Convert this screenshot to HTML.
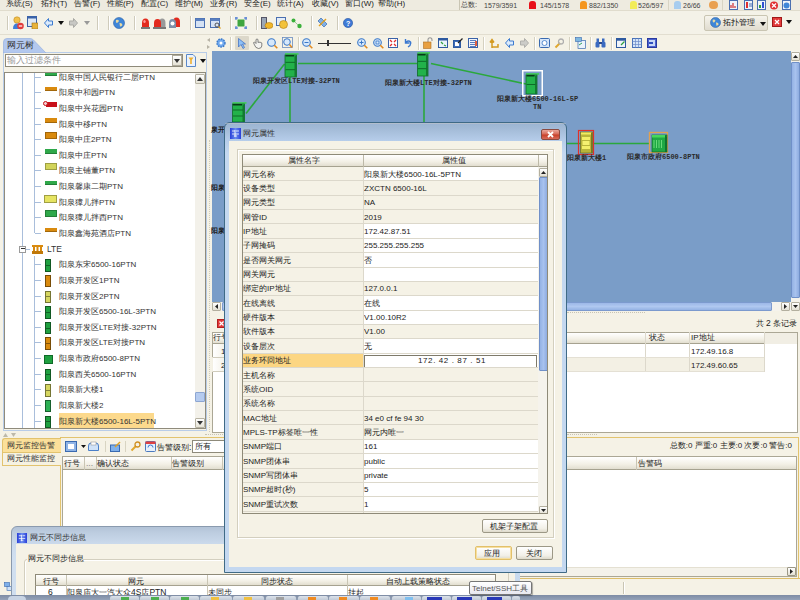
<!DOCTYPE html>
<html><head><meta charset="utf-8">
<style>
*{margin:0;padding:0;box-sizing:border-box}
html,body{width:800px;height:600px;overflow:hidden;background:#F5F2E6;font-family:"Liberation Sans",sans-serif;font-size:9px;color:#222;position:relative}
.a{position:absolute}
.t{position:absolute;white-space:nowrap;line-height:1}
.k{font-size:1.25em;line-height:0;-webkit-text-stroke:.2px;letter-spacing:-.5px}
</style></head><body>

<div class="a" style="left:0;top:0;width:800px;height:11px;background:#EEEBE0;border-bottom:1px solid #E0DCCD"></div>
<div class="t" style="left:6px;top:0px;font-size:8px;color:#222"><span class="k">系统</span>(S)</div>
<div class="t" style="left:41px;top:0px;font-size:8px;color:#222"><span class="k">拓扑</span>(T)</div>
<div class="t" style="left:74px;top:0px;font-size:8px;color:#222"><span class="k">告警</span>(F)</div>
<div class="t" style="left:107px;top:0px;font-size:8px;color:#222"><span class="k">性能</span>(P)</div>
<div class="t" style="left:141px;top:0px;font-size:8px;color:#222"><span class="k">配置</span>(C)</div>
<div class="t" style="left:175px;top:0px;font-size:8px;color:#222"><span class="k">维护</span>(M)</div>
<div class="t" style="left:210px;top:0px;font-size:8px;color:#222"><span class="k">业务</span>(R)</div>
<div class="t" style="left:244px;top:0px;font-size:8px;color:#222"><span class="k">安全</span>(E)</div>
<div class="t" style="left:277px;top:0px;font-size:8px;color:#222"><span class="k">统计</span>(A)</div>
<div class="t" style="left:312px;top:0px;font-size:8px;color:#222"><span class="k">收藏</span>(V)</div>
<div class="t" style="left:345px;top:0px;font-size:8px;color:#222"><span class="k">窗口</span>(W)</div>
<div class="t" style="left:378px;top:0px;font-size:8px;color:#222"><span class="k">帮助</span>(H)</div>
<div class="a" style="left:459px;top:0;width:1px;height:10px;background:#C9C5B4"></div>
<div class="t" style="left:461px;top:1px;font-size:7.5px;color:#444"><span class="k">总数</span>:</div><div class="t" style="left:484px;top:1.5px;font-size:7px;color:#444">1579/3591</div>
<div class="a" style="left:529px;top:1px;width:7px;height:8px;background:#E8101A;border-radius:3px 3px 0 0"></div>
<div class="t" style="left:540px;top:1.5px;font-size:7px;color:#444">145/1578</div>
<div class="a" style="left:580px;top:1px;width:7px;height:8px;background:#F5961E;border-radius:3px 3px 0 0"></div>
<div class="t" style="left:589px;top:1.5px;font-size:7px;color:#444">882/1350</div>
<div class="a" style="left:630px;top:1px;width:7px;height:8px;background:#F2EC58;border-radius:3px 3px 0 0"></div>
<div class="t" style="left:638px;top:1.5px;font-size:7px;color:#444">526/597</div>
<div class="a" style="left:674px;top:1px;width:7px;height:8px;background:#A8CDEF;border-radius:3px 3px 0 0"></div>
<div class="t" style="left:683px;top:1.5px;font-size:7px;color:#444">26/66</div>
<div class="a" style="left:668px;top:0;width:1px;height:10px;background:#D8D4C4"></div>
<div class="a" style="left:722px;top:0;width:1px;height:10px;background:#D8D4C4"></div>
<div class="a" style="left:709px;top:1px;width:9px;height:8px;background:#E9A050;border-radius:4px"></div>
<svg class="a" style="left:729px;top:0px" width="9" height="10" viewBox="0 0 9 10"><rect x=".5" y=".5" width="8" height="9" fill="#EEF3FA" stroke="#4A6FB0"/><path d="M2 8V5M4 8V3M6 8V6" stroke="#D03030" stroke-width="1.2"/></svg>
<svg class="a" style="left:744px;top:0px" width="9" height="10" viewBox="0 0 9 10"><rect x=".5" y=".5" width="8" height="9" fill="#EEF3FA" stroke="#4A6FB0"/><rect x="2" y="2" width="2" height="6" fill="#E03030"/><path d="M5 4H8M5 6H8" stroke="#4A6FB0"/></svg>
<svg class="a" style="left:757px;top:0px" width="9" height="10" viewBox="0 0 9 10"><rect x=".5" y=".5" width="8" height="9" fill="#EEF3FA" stroke="#4A6FB0"/><rect x="2" y="5" width="2" height="3" fill="#30A040"/><rect x="5" y="2" width="2" height="6" fill="#3050D0"/></svg>
<svg class="a" style="left:769px;top:1px" width="10" height="9" viewBox="0 0 10 9"><circle cx="5" cy="4.5" r="4" fill="#E03030"/><path d="M3 2.5L7 6.5M7 2.5L3 6.5" stroke="#fff" stroke-width="1.3"/></svg>
<svg class="a" style="left:782px;top:0px" width="9" height="10" viewBox="0 0 9 10"><rect x=".5" y=".5" width="8" height="9" fill="#EEF3FA" stroke="#4A6FB0"/><circle cx="4.5" cy="5.5" r="3" fill="#3F86D8"/></svg>


<div class="a" style="left:0;top:11px;width:800px;height:23px;background:#F4F2E8"></div>

<div class="a" style="left:7px;top:16px;width:1px;height:14px;background:#CFCBBB;box-shadow:1px 0 0 #fff"></div>
<div class="a" style="left:97px;top:16px;width:1px;height:14px;background:#CFCBBB;box-shadow:1px 0 0 #fff"></div>
<div class="a" style="left:108px;top:16px;width:1px;height:14px;background:#CFCBBB;box-shadow:1px 0 0 #fff"></div>
<div class="a" style="left:134px;top:16px;width:1px;height:14px;background:#CFCBBB;box-shadow:1px 0 0 #fff"></div>
<div class="a" style="left:190px;top:16px;width:1px;height:14px;background:#CFCBBB;box-shadow:1px 0 0 #fff"></div>
<div class="a" style="left:230px;top:16px;width:1px;height:14px;background:#CFCBBB;box-shadow:1px 0 0 #fff"></div>
<div class="a" style="left:256px;top:16px;width:1px;height:14px;background:#CFCBBB;box-shadow:1px 0 0 #fff"></div>
<div class="a" style="left:311px;top:16px;width:1px;height:14px;background:#CFCBBB;box-shadow:1px 0 0 #fff"></div>
<div class="a" style="left:337px;top:16px;width:1px;height:14px;background:#CFCBBB;box-shadow:1px 0 0 #fff"></div>

<svg class="a" style="left:12px;top:16px" width="12" height="14" viewBox="0 0 12 14"><circle cx="5" cy="4" r="3.2" fill="#F1C04A" stroke="#C08A20" stroke-width=".6"/><path d="M1 13 Q1 7.5 5 7.5 Q8 7.5 8 10 L8 13Z" fill="#3D7DD8"/><circle cx="8.5" cy="10" r="3.3" fill="#E23B3B"/><path d="M6.8 10h3.4" stroke="#fff" stroke-width="1.2"/></svg>
<svg class="a" style="left:27px;top:16px" width="11" height="13" viewBox="0 0 11 13"><rect x=".5" y=".5" width="9" height="10" fill="#DDE8F6" stroke="#3A62A8"/><rect x=".5" y=".5" width="9" height="2" fill="#3A62A8"/><rect x="5" y="7" width="6" height="6" fill="#E8B33A" stroke="#9C7420" stroke-width=".6"/></svg>
<svg class="a" style="left:44px;top:18px" width="9" height="10" viewBox="0 0 9 10"><path d="M4.5 .5 L.5 5 L4.5 9.5 V7 H8.5 V3 H4.5Z" fill="#DCEBFB" stroke="#3C7BD0"/></svg>
<svg class="a" style="left:58px;top:21px" width="6" height="4" viewBox="0 0 6 4"><path d="M0 0H6L3 4Z" fill="#111"/></svg>
<svg class="a" style="left:69px;top:18px" width="9" height="10" viewBox="0 0 9 10"><path d="M4.5 .5 L8.5 5 L4.5 9.5 V7 H.5 V3 H4.5Z" fill="#C8C8C4" stroke="#A9A9A4"/></svg>
<svg class="a" style="left:84px;top:21px" width="6" height="4" viewBox="0 0 6 4"><path d="M0 0H6L3 4Z" fill="#999"/></svg>
<svg class="a" style="left:113px;top:17px" width="12" height="12" viewBox="0 0 12 12"><circle cx="6" cy="6" r="5.5" fill="#3F86D8" stroke="#2A5FA6" stroke-width=".6"/><path d="M3 3 Q5 2 6 4 Q5 6 3.5 6 Q2.5 5 3 3Z M6.5 6 Q9 5.5 9.5 8 Q8 10 7 9.5Z" fill="#E8D9A0"/></svg>
<svg class="a" style="left:141px;top:17px" width="9" height="12" viewBox="0 0 9 12"><path d="M1 11 V6 Q1 1.5 4.5 1.5 Q8 1.5 8 6 V11Z" fill="#E22A1E"/><rect x="0" y="10" width="9" height="2" fill="#777"/><ellipse cx="3.5" cy="4.5" rx="1.2" ry="1.5" fill="#F99"/></svg>
<svg class="a" style="left:153px;top:17px" width="13" height="12" viewBox="0 0 13 12"><path d="M6 11 V6 Q6 1.5 9.2 1.5 Q12.5 1.5 12.5 6 V11Z" fill="#999"/><path d="M1 11 V6 Q1 2 4.5 2 Q8 2 8 6 V11Z" fill="#E22A1E"/><rect x="0" y="10" width="13" height="2" fill="#777"/></svg>
<svg class="a" style="left:168px;top:16px" width="13" height="13" viewBox="0 0 13 13"><path d="M5 11 V6 Q5 1.5 8.5 1.5 Q12 1.5 12 6 V11Z" fill="#E22A1E"/><path d="M1 12 V7 Q1 3 4.5 3 Q8 3 8 7 V12Z" fill="#7E8FA8"/><circle cx="4.5" cy="7.5" r="2" fill="#fff"/></svg>
<svg class="a" style="left:195px;top:18px" width="10" height="10" viewBox="0 0 10 10"><rect x=".5" y=".5" width="9" height="9" fill="#D5E2F4" stroke="#4A6FB0"/><rect x=".5" y=".5" width="9" height="2.5" fill="#5A80C0"/></svg>
<svg class="a" style="left:210px;top:18px" width="11" height="11" viewBox="0 0 11 11"><rect x=".5" y=".5" width="9" height="9" fill="#D5E2F4" stroke="#4A6FB0"/><rect x=".5" y=".5" width="9" height="2.5" fill="#5A80C0"/><circle cx="7" cy="7" r="2" fill="none" stroke="#333" stroke-width=".8"/><path d="M8.5 8.5L10.5 10.5" stroke="#E0A020" stroke-width="1.2"/></svg>
<svg class="a" style="left:235px;top:17px" width="12" height="12" viewBox="0 0 12 12"><rect x="2.5" y="2.5" width="7" height="7" fill="#3FA63F"/><path d="M0 1h3M1 0v3M9 1h3M11 0v3M0 11h3M1 9v3M9 11h3M11 9v3" stroke="#3B6FD0" stroke-width="1"/></svg>
<svg class="a" style="left:261px;top:17px" width="12" height="12" viewBox="0 0 12 12"><rect x=".5" y=".5" width="5" height="11" fill="#9AA6B6" stroke="#556"/><ellipse cx="8" cy="8.5" rx="4" ry="3" fill="#F0B62A" stroke="#B07A10" stroke-width=".6"/></svg>
<svg class="a" style="left:276px;top:17px" width="12" height="12" viewBox="0 0 12 12"><rect x=".5" y=".5" width="9" height="8" fill="#E4EDF8" stroke="#4A6FB0"/><circle cx="7.5" cy="7.5" r="4" fill="#F2C23A" stroke="#B07A10" stroke-width=".6"/></svg>
<svg class="a" style="left:291px;top:18px" width="11" height="11" viewBox="0 0 11 11"><circle cx="2.5" cy="2.5" r="2" fill="#3BB03B"/><circle cx="8.5" cy="8" r="2.2" fill="#3BB03B"/><path d="M4 4L7 7" stroke="#8B8" stroke-width=".8"/></svg>
<svg class="a" style="left:317px;top:17px" width="11" height="12" viewBox="0 0 11 12"><path d="M1 4L7 10L10 7L4 1Z" fill="#7FB0E8" stroke="#3A6AB0" stroke-width=".7"/><path d="M2 9L9 2" stroke="#E0A020" stroke-width="1.4"/></svg>
<svg class="a" style="left:343px;top:18px" width="10" height="10" viewBox="0 0 10 10"><circle cx="5" cy="5" r="4.6" fill="#3E7AD6" stroke="#2552A0" stroke-width=".6"/><text x="3" y="8" font-size="7" fill="#fff" font-family="Liberation Sans" font-weight="bold">?</text></svg>
<div class="a" style="left:704px;top:15px;width:64px;height:16px;background:linear-gradient(#F6F4EC,#E0DCCF);border:1px solid #C9C5B2;border-radius:2px"></div>
<svg class="a" style="left:710px;top:17px" width="11" height="11" viewBox="0 0 12 12"><circle cx="6" cy="6" r="5.5" fill="#3F86D8" stroke="#2A5FA6" stroke-width=".6"/><path d="M3 3 Q5 2 6 4 Q5 6 3.5 6 Q2.5 5 3 3Z M6.5 6 Q9 5.5 9.5 8 Q8 10 7 9.5Z" fill="#E8D9A0"/></svg>
<div class="t" style="left:723px;top:19px;font-size:8px;color:#111"><span class="k">拓扑管理</span></div>
<svg class="a" style="left:760px;top:22px" width="6" height="4" viewBox="0 0 6 4"><path d="M0 0H6L3 4Z" fill="#111"/></svg>
<svg class="a" style="left:772px;top:17px" width="10" height="10" viewBox="0 0 10 10"><rect x=".5" y=".5" width="9" height="9" fill="#E23A3A" stroke="#A01818"/><path d="M3 3L7 7M7 3L3 7" stroke="#fff" stroke-width="1.3"/></svg>
<svg class="a" style="left:786px;top:20px" width="6" height="4" viewBox="0 0 6 4"><path d="M0 0H6L3 4Z" fill="#111"/></svg>
<div class="a" style="left:0;top:34px;width:800px;height:1px;background:#E2DED0"></div>


<div class="a" style="left:3px;top:52px;width:204px;height:379px;border:1px solid #B8CCE8;background:#F5F2E6"></div>
<div class="a" style="left:5px;top:54px;width:178px;height:13px;background:#fff;border:1px solid #8E8A7A"></div>
<div class="a" style="left:4px;top:72px;width:202px;height:357px;background:#fff;border:1px solid #8F8B7C"></div>

<div class="a" style="left:5px;top:73px;width:190px;height:355px;overflow:hidden">
<div class="a" style="left:17px;top:0;width:1px;height:355px;background:#A9BEDB"></div>
<div class="a" style="left:29px;top:0;width:1px;height:160.00px;background:#A9BEDB"></div>
<div class="a" style="left:29px;top:182.63px;width:1px;height:300px;background:#A9BEDB"></div>
<div class="a" style="left:30px;top:3.70px;width:6px;height:1px;background:#A9BEDB"></div>
<div class="a" style="left:39.5px;top:-1.80px;width:12.5px;height:4.5px;background:#2FA84A;border-bottom:1px solid rgba(0,0,0,.25)"></div>
<div class="t" style="left:54px;top:0.70px;font-size:8px;color:#333"><span class="k">阳泉中国人民银行二层</span>PTN</div>
<div class="a" style="left:30px;top:19.33px;width:6px;height:1px;background:#A9BEDB"></div>
<div class="a" style="left:39.5px;top:13.83px;width:12.5px;height:4.5px;background:#D98A0E;border-bottom:1px solid rgba(0,0,0,.25)"></div>
<div class="t" style="left:54px;top:16.33px;font-size:8px;color:#333"><span class="k">阳泉中和园</span>PTN</div>
<div class="a" style="left:30px;top:34.96px;width:6px;height:1px;background:#A9BEDB"></div>
<div class="a" style="left:40.5px;top:29.46px;width:11.5px;height:4.5px;background:#C8101A"></div>
<div class="a" style="left:38px;top:27.96px;width:5px;height:5px;background:#F3D0D0;border:1px solid #C8101A;border-radius:50%"></div>
<div class="t" style="left:54px;top:31.96px;font-size:8px;color:#333"><span class="k">阳泉中兴花园</span>PTN</div>
<div class="a" style="left:30px;top:50.59px;width:6px;height:1px;background:#A9BEDB"></div>
<div class="a" style="left:39.5px;top:45.09px;width:12.5px;height:4.5px;background:#D98A0E;border-bottom:1px solid rgba(0,0,0,.25)"></div>
<div class="t" style="left:54px;top:47.59px;font-size:8px;color:#333"><span class="k">阳泉中移</span>PTN</div>
<div class="a" style="left:30px;top:66.22px;width:6px;height:1px;background:#A9BEDB"></div>
<div class="a" style="left:39.5px;top:59.22px;width:12.5px;height:7px;background:#D98A0E;border:1px solid rgba(0,0,0,.25)"></div>
<div class="t" style="left:54px;top:63.22px;font-size:8px;color:#333"><span class="k">阳泉中庄</span>2PTN</div>
<div class="a" style="left:30px;top:81.85px;width:6px;height:1px;background:#A9BEDB"></div>
<div class="a" style="left:39.5px;top:76.35px;width:12.5px;height:4.5px;background:#2FA84A;border-bottom:1px solid rgba(0,0,0,.25)"></div>
<div class="t" style="left:54px;top:78.85px;font-size:8px;color:#333"><span class="k">阳泉中庄</span>PTN</div>
<div class="a" style="left:30px;top:97.48px;width:6px;height:1px;background:#A9BEDB"></div>
<div class="a" style="left:39.5px;top:90.48px;width:12.5px;height:7px;background:#D2D45A;border:1px solid rgba(0,0,0,.25)"></div>
<div class="t" style="left:54px;top:94.48px;font-size:8px;color:#333"><span class="k">阳泉主铺董</span>PTN</div>
<div class="a" style="left:30px;top:113.11px;width:6px;height:1px;background:#A9BEDB"></div>
<div class="a" style="left:39.5px;top:107.61px;width:12.5px;height:4.5px;background:#2FA84A;border-bottom:1px solid rgba(0,0,0,.25)"></div>
<div class="t" style="left:54px;top:110.11px;font-size:8px;color:#333"><span class="k">阳泉馨康二期</span>PTN</div>
<div class="a" style="left:30px;top:128.74px;width:6px;height:1px;background:#A9BEDB"></div>
<div class="a" style="left:39px;top:121.74px;width:13px;height:8px;background:#E6E462;border:1px solid rgba(0,0,0,.3)"></div>
<div class="t" style="left:54px;top:125.74px;font-size:8px;color:#333"><span class="k">阳泉獐儿拌</span>PTN</div>
<div class="a" style="left:30px;top:144.37px;width:6px;height:1px;background:#A9BEDB"></div>
<div class="a" style="left:39.5px;top:137.37px;width:12.5px;height:7px;background:#2FA84A;border:1px solid rgba(0,0,0,.25)"></div>
<div class="t" style="left:54px;top:141.37px;font-size:8px;color:#333"><span class="k">阳泉獐儿拌西</span>PTN</div>
<div class="a" style="left:30px;top:160.00px;width:6px;height:1px;background:#A9BEDB"></div>
<div class="a" style="left:39.5px;top:154.50px;width:12.5px;height:4.5px;background:#D98A0E;border-bottom:1px solid rgba(0,0,0,.25)"></div>
<div class="t" style="left:54px;top:157.00px;font-size:8px;color:#333"><span class="k">阳泉鑫海苑酒店</span>PTN</div>
<div class="a" style="left:14px;top:172.63px;width:7px;height:7px;background:#fff;border:1px solid #9A9A9A"></div>
<div class="a" style="left:15.5px;top:175.13px;width:4px;height:1px;background:#333"></div>
<div class="a" style="left:21px;top:175.63px;width:4px;height:1px;background:#A9BEDB"></div>
<svg class="a" style="left:27px;top:171.63px" width="11" height="9" viewBox="0 0 11 9"><rect x="0" y="0" width="11" height="2" fill="#D98A0E"/><rect x="1" y="2" width="2" height="7" fill="#D98A0E"/><rect x="4.5" y="2" width="2" height="7" fill="#D98A0E"/><rect x="8" y="2" width="2" height="7" fill="#D98A0E"/><rect x="0" y="6" width="11" height="3" fill="#C07808"/></svg>
<div class="t" style="left:42px;top:172.13px;font-size:8.5px;color:#333">LTE</div>
<div class="a" style="left:30px;top:191.26px;width:6px;height:1px;background:#A9BEDB"></div>
<div class="a" style="left:39.5px;top:186.26px;width:6.5px;height:12.5px;background:#1FA040;border:1px solid rgba(0,0,0,.45)"></div>
<div class="a" style="left:40.5px;top:192.06px;width:4.5px;height:1px;background:rgba(0,0,0,.4)"></div>
<div class="t" style="left:54px;top:188.26px;font-size:8px;color:#333"><span class="k">阳泉东宋</span>6500-16PTN</div>
<div class="a" style="left:30px;top:206.89px;width:6px;height:1px;background:#A9BEDB"></div>
<div class="a" style="left:39.5px;top:201.89px;width:6.5px;height:12.5px;background:#D98A0E;border:1px solid rgba(0,0,0,.45)"></div>
<div class="t" style="left:54px;top:203.89px;font-size:8px;color:#333"><span class="k">阳泉开发区</span>1PTN</div>
<div class="a" style="left:30px;top:222.52px;width:6px;height:1px;background:#A9BEDB"></div>
<div class="a" style="left:39.5px;top:217.52px;width:6.5px;height:12.5px;background:#D6D660;border:1px solid rgba(0,0,0,.45)"></div>
<div class="a" style="left:40.5px;top:223.32px;width:4.5px;height:1px;background:rgba(0,0,0,.4)"></div>
<div class="t" style="left:54px;top:219.52px;font-size:8px;color:#333"><span class="k">阳泉开发区</span>2PTN</div>
<div class="a" style="left:30px;top:238.15px;width:6px;height:1px;background:#A9BEDB"></div>
<div class="a" style="left:39.5px;top:233.15px;width:6.5px;height:12.5px;background:#1FA040;border:1px solid rgba(0,0,0,.45)"></div>
<div class="a" style="left:40.5px;top:238.95px;width:4.5px;height:1px;background:rgba(0,0,0,.4)"></div>
<div class="t" style="left:54px;top:235.15px;font-size:8px;color:#333"><span class="k">阳泉开发区</span>6500-16L-3PTN</div>
<div class="a" style="left:30px;top:253.78px;width:6px;height:1px;background:#A9BEDB"></div>
<div class="a" style="left:39.5px;top:248.78px;width:6.5px;height:12.5px;background:#1FA040;border:1px solid rgba(0,0,0,.45)"></div>
<div class="a" style="left:40.5px;top:254.58px;width:4.5px;height:1px;background:rgba(0,0,0,.4)"></div>
<div class="t" style="left:54px;top:250.78px;font-size:8px;color:#333"><span class="k">阳泉开发区</span>LTE<span class="k">对接</span>-32PTN</div>
<div class="a" style="left:30px;top:269.41px;width:6px;height:1px;background:#A9BEDB"></div>
<div class="a" style="left:39.5px;top:264.41px;width:6.5px;height:12.5px;background:#D98A0E;border:1px solid rgba(0,0,0,.45)"></div>
<div class="a" style="left:40.5px;top:270.21px;width:4.5px;height:1px;background:rgba(0,0,0,.4)"></div>
<div class="t" style="left:54px;top:266.41px;font-size:8px;color:#333"><span class="k">阳泉开发区</span>LTE<span class="k">对接</span>PTN</div>
<div class="a" style="left:30px;top:285.04px;width:6px;height:1px;background:#A9BEDB"></div>
<div class="a" style="left:39px;top:281.54px;width:9px;height:9px;background:#1FA040;border:1px solid #0E6A28"></div>
<div class="t" style="left:54px;top:282.04px;font-size:8px;color:#333"><span class="k">阳泉市政府</span>6500-8PTN</div>
<div class="a" style="left:30px;top:300.67px;width:6px;height:1px;background:#A9BEDB"></div>
<div class="a" style="left:39.5px;top:295.67px;width:6.5px;height:12.5px;background:#1FA040;border:1px solid rgba(0,0,0,.45)"></div>
<div class="a" style="left:40.5px;top:301.47px;width:4.5px;height:1px;background:rgba(0,0,0,.4)"></div>
<div class="t" style="left:54px;top:297.67px;font-size:8px;color:#333"><span class="k">阳泉西关</span>6500-16PTN</div>
<div class="a" style="left:30px;top:316.30px;width:6px;height:1px;background:#A9BEDB"></div>
<div class="a" style="left:39.5px;top:311.30px;width:6.5px;height:12.5px;background:#D6D660;border:1px solid rgba(0,0,0,.45)"></div>
<div class="a" style="left:40.5px;top:317.10px;width:4.5px;height:1px;background:rgba(0,0,0,.4)"></div>
<div class="t" style="left:54px;top:313.30px;font-size:8px;color:#333"><span class="k">阳泉新大楼</span>1</div>
<div class="a" style="left:30px;top:331.93px;width:6px;height:1px;background:#A9BEDB"></div>
<div class="a" style="left:39.5px;top:326.93px;width:6.5px;height:12.5px;background:#2DB054;border:1px solid rgba(0,0,0,.45)"></div>
<div class="t" style="left:54px;top:328.93px;font-size:8px;color:#333"><span class="k">阳泉新大楼</span>2</div>
<div class="a" style="left:30px;top:347.56px;width:6px;height:1px;background:#A9BEDB"></div>
<div class="a" style="left:39.5px;top:342.56px;width:6.5px;height:12.5px;background:#1FA040;border:1px solid rgba(0,0,0,.45)"></div>
<div class="a" style="left:40.5px;top:348.36px;width:4.5px;height:1px;background:rgba(0,0,0,.4)"></div>
<div class="a" style="left:54px;top:339.56px;width:95px;height:15.5px;background:#FCD98C"></div>
<div class="t" style="left:54px;top:344.56px;font-size:8px;color:#333"><span class="k">阳泉新大楼</span>6500-16L-5PTN</div>
</div>
<div class="a" style="left:195px;top:73px;width:10px;height:355px;background:#F3F1EA"></div>
<div class="a" style="left:195px;top:74px;width:10px;height:10px;background:linear-gradient(#FEFEFE,#E6E3D6);border:1px solid #B7B3A3;border-radius:1px"></div>
<svg class="a" style="left:197px;top:77px" width="6" height="4" viewBox="0 0 6 4"><path d="M0 4H6L3 0Z" fill="#333"/></svg>
<div class="a" style="left:195px;top:392px;width:10px;height:10px;background:#B5CBEF;border:1px solid #8DA6D2;border-radius:1px"></div>
<div class="a" style="left:195px;top:418px;width:10px;height:10px;background:linear-gradient(#FEFEFE,#E6E3D6);border:1px solid #B7B3A3;border-radius:1px"></div>
<svg class="a" style="left:197px;top:421px" width="6" height="4" viewBox="0 0 6 4"><path d="M0 0H6L3 4Z" fill="#333"/></svg>
<div class="t" style="left:7px;top:56px;font-size:9px;color:#999"><span class="k">输入过滤条件</span></div>
<div class="a" style="left:172px;top:55px;width:10px;height:11px;background:linear-gradient(#FFF,#E4E1D4);border:1px solid #AFAB9C"></div>
<svg class="a" style="left:174px;top:59px" width="6" height="4" viewBox="0 0 6 4"><path d="M0 0H6L3 4Z" fill="#333"/></svg>
<svg class="a" style="left:186px;top:54px" width="10" height="13" viewBox="0 0 10 13"><path d="M.5 .5H7L9.5 3V12.5H.5Z" fill="#EAF2FC" stroke="#5A88C8"/><path d="M2.5 3.5H7.5L5.8 6V10H4.2V6Z" fill="#F0B030"/></svg>
<svg class="a" style="left:200px;top:59px" width="6" height="4" viewBox="0 0 6 4"><path d="M0 0H6L3 4Z" fill="#111"/></svg>

<svg class="a" style="left:206px;top:37px" width="5" height="13" viewBox="0 0 5 13"><path d="M4 1V5L1 3Z M1 8V12L4 10Z" fill="#B8B4A6"/></svg>
<div class="a" style="left:230px;top:37px;width:1px;height:13px;background:#D5D1C0;box-shadow:1px 0 0 #fff"></div>
<div class="a" style="left:298px;top:37px;width:1px;height:13px;background:#D5D1C0;box-shadow:1px 0 0 #fff"></div>
<div class="a" style="left:418px;top:37px;width:1px;height:13px;background:#D5D1C0;box-shadow:1px 0 0 #fff"></div>
<div class="a" style="left:483px;top:37px;width:1px;height:13px;background:#D5D1C0;box-shadow:1px 0 0 #fff"></div>
<div class="a" style="left:534px;top:37px;width:1px;height:13px;background:#D5D1C0;box-shadow:1px 0 0 #fff"></div>
<div class="a" style="left:569px;top:37px;width:1px;height:13px;background:#D5D1C0;box-shadow:1px 0 0 #fff"></div>
<div class="a" style="left:590px;top:37px;width:1px;height:13px;background:#D5D1C0;box-shadow:1px 0 0 #fff"></div>
<div class="a" style="left:611px;top:37px;width:1px;height:13px;background:#D5D1C0;box-shadow:1px 0 0 #fff"></div>
<div class="a" style="left:235px;top:36px;width:14px;height:14px;background:#DCD8CA;border-radius:1px"></div>
<svg class="a" style="left:216px;top:38px" width="10" height="10" viewBox="0 0 10 10"><circle cx="5" cy="5" r="4" fill="#6FA8EE" stroke="#3A78C8" stroke-width="1.4" stroke-dasharray="1.6 1"/><circle cx="5" cy="5" r="1.5" fill="#fff"/></svg>
<svg class="a" style="left:238px;top:38px" width="8" height="11" viewBox="0 0 8 11"><path d="M.5 .5V9L3 6.5L5 10.5L6.5 9.5L4.5 6H7.5Z" fill="#8EC0F6" stroke="#3A6AC0" stroke-width=".7"/></svg>
<svg class="a" style="left:252px;top:38px" width="11" height="11" viewBox="0 0 11 11"><path d="M2 6Q1 4 2.5 4L4 5.5V2Q4 1 5 1Q6 1 6 2V4.5Q7 3.5 8 4.5Q9 3.8 9.8 5V8Q9.5 10.5 6.5 10.5Q3.5 10.5 2 6Z" fill="#F4F4F0" stroke="#555" stroke-width=".7"/></svg>
<svg class="a" style="left:267px;top:38px" width="11" height="11" viewBox="0 0 11 11"><circle cx="4.5" cy="4.5" r="3.8" fill="#D6E8FB" stroke="#3A78C8" stroke-width="1.1"/><path d="M7.3 7.3L10.3 10.3" stroke="#E08A20" stroke-width="1.6"/></svg>
<svg class="a" style="left:282px;top:37px" width="11" height="12" viewBox="0 0 11 12"><rect x=".5" y=".5" width="10" height="10" fill="none" stroke="#6A8CC0" stroke-width=".8"/><circle cx="5" cy="5" r="3.3" fill="#D6E8FB" stroke="#3A78C8" stroke-width="1"/><path d="M7.5 7.5L10 10.5" stroke="#E08A20" stroke-width="1.5"/></svg>
<svg class="a" style="left:302px;top:38px" width="11" height="11" viewBox="0 0 11 11"><circle cx="4.5" cy="4.5" r="3.8" fill="#D6E8FB" stroke="#3A78C8" stroke-width="1.1"/><path d="M2.5 4.5H6.5" stroke="#3A78C8" stroke-width="1"/><path d="M7.3 7.3L10.3 10.3" stroke="#E08A20" stroke-width="1.6"/></svg>
<div class="a" style="left:318px;top:43px;width:33px;height:1px;background:#333"></div><div class="a" style="left:327px;top:40px;width:2px;height:6px;background:#333"></div>
<svg class="a" style="left:357px;top:38px" width="11" height="11" viewBox="0 0 11 11"><circle cx="4.5" cy="4.5" r="3.8" fill="#D6E8FB" stroke="#3A78C8" stroke-width="1.1"/><path d="M2.5 4.5H6.5M4.5 2.5V6.5" stroke="#3A78C8" stroke-width="1"/><path d="M7.3 7.3L10.3 10.3" stroke="#E08A20" stroke-width="1.6"/></svg>
<svg class="a" style="left:373px;top:38px" width="11" height="11" viewBox="0 0 11 11"><circle cx="4.5" cy="4.5" r="3.8" fill="#D6E8FB" stroke="#3A78C8" stroke-width="1.1"/><rect x="3" y="3" width="3" height="3" fill="none" stroke="#3A78C8" stroke-width=".8"/><path d="M7.3 7.3L10.3 10.3" stroke="#E08A20" stroke-width="1.6"/></svg>
<svg class="a" style="left:388px;top:38px" width="10" height="10" viewBox="0 0 10 10"><rect x=".5" y=".5" width="9" height="9" fill="#fff" stroke="#3A62A8"/><path d="M2 2L4 4M8 2L6 4M2 8L4 6M8 8L6 6" stroke="#E03030" stroke-width="1.3"/></svg>
<svg class="a" style="left:404px;top:38px" width="8" height="10" viewBox="0 0 8 10"><path d="M1.5 1V5H5.5M1.5 5Q4 1.5 6.5 4Q7.5 7 4 9" fill="none" stroke="#3A78D0" stroke-width="1.4"/></svg>
<svg class="a" style="left:423px;top:37px" width="11" height="12" viewBox="0 0 11 12"><path d="M5 5V3Q5 .8 7 .8Q9 .8 9 3V4" fill="none" stroke="#999" stroke-width="1.1"/><rect x=".5" y="5" width="7.5" height="6.5" fill="#E8A040" stroke="#B07020" stroke-width=".6"/></svg>
<svg class="a" style="left:438px;top:38px" width="10" height="10" viewBox="0 0 10 10"><rect x=".5" y=".5" width="9" height="9" fill="#EAF3FB" stroke="#2E5AA0"/><rect x=".5" y=".5" width="9" height="2" fill="#2E5AA0"/><path d="M3 4L5 6M6 7L8 8" stroke="#30A040" stroke-width="1.2"/></svg>
<svg class="a" style="left:453px;top:38px" width="10" height="10" viewBox="0 0 10 10"><rect x=".5" y="2.5" width="7" height="7" fill="#3E6EB8" stroke="#2E5AA0"/><rect x="2" y="4" width="4" height="4" fill="#fff"/><path d="M5 5L9.5 .5" stroke="#222" stroke-width="1.2"/></svg>
<svg class="a" style="left:468px;top:38px" width="10" height="10" viewBox="0 0 10 10"><rect x=".5" y=".5" width="9" height="9" fill="#F0F4FA" stroke="#3A62A8"/><path d="M2 2.5H8M2 4.5H8M2 6.5H8M2 8.5H8" stroke="#4A72B8" stroke-width=".9"/><rect x="7" y="3" width="2" height="5" fill="#E06040"/></svg>
<svg class="a" style="left:489px;top:38px" width="10" height="11" viewBox="0 0 10 11"><path d="M3 10V3M1 4.5L3 1.5L5 4.5M3 9H9V6" fill="none" stroke="#D49A20" stroke-width="1.5"/></svg>
<svg class="a" style="left:505px;top:38px" width="9" height="10" viewBox="0 0 9 10"><path d="M4.5 .5 L.5 5 L4.5 9.5 V7 H8.5 V3 H4.5Z" fill="#DCEBFB" stroke="#3C7BD0"/></svg>
<svg class="a" style="left:520px;top:38px" width="9" height="10" viewBox="0 0 9 10"><path d="M4.5 .5 L8.5 5 L4.5 9.5 V7 H.5 V3 H4.5Z" fill="#CCCCC8" stroke="#B0B0AC"/></svg>
<svg class="a" style="left:539px;top:38px" width="11" height="10" viewBox="0 0 11 10"><rect x=".5" y=".5" width="10" height="9" rx="1" fill="#D6E6FA" stroke="#3A6AB0"/><circle cx="5.5" cy="5" r="2.5" fill="#fff" stroke="#3A78C8" stroke-width=".8"/></svg>
<svg class="a" style="left:554px;top:38px" width="10" height="11" viewBox="0 0 10 11"><path d="M1.5 9.5L6 5" stroke="#E0A830" stroke-width="2"/><circle cx="7" cy="3.5" r="2.5" fill="none" stroke="#B0B0B0" stroke-width="1.3"/></svg>
<svg class="a" style="left:575px;top:37px" width="11" height="12" viewBox="0 0 11 12"><rect x="3" y="3.5" width="7.5" height="8" fill="#EAF3FB" stroke="#3A6AB0" stroke-width=".7"/><rect x=".5" y=".5" width="6" height="4" fill="#7FB8E0" stroke="#3A6AB0" stroke-width=".6"/><path d="M4 8L7 6" stroke="#30A060"/></svg>
<svg class="a" style="left:595px;top:38px" width="11" height="10" viewBox="0 0 11 10"><rect x=".5" y="4" width="4" height="5.5" rx="1" fill="#3A6AC0"/><rect x="6.5" y="4" width="4" height="5.5" rx="1" fill="#3A6AC0"/><rect x="1.5" y=".5" width="2.5" height="4" fill="#3A6AC0"/><rect x="7" y=".5" width="2.5" height="4" fill="#3A6AC0"/><rect x="4" y="4" width="3" height="2" fill="#2A4A90"/></svg>
<svg class="a" style="left:616px;top:38px" width="10" height="10" viewBox="0 0 10 10"><rect x=".5" y=".5" width="9" height="9" fill="#F0F4FA" stroke="#2E5AA0"/><rect x=".5" y=".5" width="9" height="2.2" fill="#2E5AA0"/><path d="M5 7L8.5 3.5" stroke="#30A040" stroke-width="1.2"/></svg>
<svg class="a" style="left:632px;top:38px" width="10" height="10" viewBox="0 0 10 10"><rect x=".5" y=".5" width="9" height="9" fill="#D4E4F8" stroke="#4A72B8"/><path d="M.5 3.5H9.5M.5 6.5H9.5M3.5 .5V9.5M6.5 .5V9.5" stroke="#6A8AC8" stroke-width=".7"/></svg>
<svg class="a" style="left:647px;top:38px" width="10" height="10" viewBox="0 0 10 10"><rect x=".5" y=".5" width="9" height="9" fill="#4A62D0" stroke="#2A3AA0"/><rect x="2" y="2" width="6" height="6" fill="#C8D8F8"/><rect x="2" y="4" width="4" height="2" fill="#3050C0"/></svg>
<svg class="a" style="left:3px;top:37px" width="46" height="16" viewBox="0 0 46 16"><path d="M.5 16V5Q.5 1.5 4 1.5H27Q29 1.5 30.5 3L43 16Z" fill="#B3C8EE" stroke="#9EB6E0" stroke-width=".8"/></svg>

<div class="t" style="left:7px;top:41px;font-size:9px;color:#333"><span class="k">网元树</span></div>
<div class="a" style="left:212px;top:51px;width:579px;height:251px;background:#7A9DC8"></div>
<div class="a" style="left:791px;top:51px;width:9px;height:251px;background:#F5F2E6"></div>
<div class="a" style="left:212px;top:302px;width:588px;height:9px;background:#F5F2E6"></div>
<div class="a" style="left:222px;top:302px;width:550px;height:9px;background:#9DBCE8;border-radius:2px"></div>

<svg class="a" style="left:0;top:0" width="800" height="600" viewBox="0 0 800 600"><g stroke="#2BA83C" stroke-width="1.6" fill="none"><path d="M298 63.5H417"/><path d="M246 113.5L284.5 64"/><path d="M290 77V123"/><path d="M424 76V123"/><path d="M431 63.5L526 84"/><path d="M566 143.5H649"/></g><rect x="285" y="53" width="13.5" height="2" fill="#3DD24E" opacity=".8"/><rect x="285" y="55" width="11.5" height="22" fill="#22B24A" stroke="#0F6A28" stroke-width="0.8"/><rect x="294.5" y="56" width="2" height="21" fill="#137A30"/><rect x="285.5" y="55" width="8.5" height="1.5" fill="#083A18"/><rect x="285.5" y="61.83" width="9.5" height="1" fill="#0E6A28"/><rect x="285.5" y="69.17" width="9.5" height="1" fill="#0E6A28"/><rect x="232.5" y="102" width="14.0" height="2" fill="#3DD24E" opacity=".8"/><rect x="232.5" y="104" width="12.0" height="18" fill="#22B24A" stroke="#0F6A28" stroke-width="0.8"/><rect x="242.5" y="105" width="2" height="17" fill="#137A30"/><rect x="233.0" y="104" width="9.0" height="1.5" fill="#083A18"/><rect x="233.0" y="109.50" width="10.0" height="1" fill="#0E6A28"/><rect x="233.0" y="115.50" width="10.0" height="1" fill="#0E6A28"/><rect x="417.5" y="52" width="12.5" height="2" fill="#3DD24E" opacity=".8"/><rect x="417.5" y="54" width="10.5" height="22" fill="#22B24A" stroke="#0F6A28" stroke-width="0.8"/><rect x="426" y="55" width="2" height="21" fill="#137A30"/><rect x="418.0" y="54" width="7.5" height="1.5" fill="#083A18"/><rect x="418.0" y="60.83" width="8.5" height="1" fill="#0E6A28"/><rect x="418.0" y="68.17" width="8.5" height="1" fill="#0E6A28"/><rect x="522.75" y="70.75" width="19.5" height="25" fill="none" stroke="#fff" stroke-width="1.5"/><rect x="526" y="73" width="13" height="2" fill="#3DD24E" opacity=".8"/><rect x="526" y="75" width="11" height="19" fill="#22B24A" stroke="#0F6A28" stroke-width="0.8"/><rect x="535" y="76" width="2" height="18" fill="#137A30"/><rect x="526.5" y="75" width="8" height="1.5" fill="#083A18"/><rect x="526.5" y="84.00" width="9" height="1" fill="#0E6A28"/><rect x="578.5" y="130.5" width="15" height="24" fill="none" stroke="#E0302A" stroke-width="1.2"/><rect x="580.5" y="132" width="12" height="21" fill="#B8B43A" stroke="#6F6C20" stroke-width=".7"/><rect x="581" y="132.5" width="10" height="2" fill="#F0EC60"/><rect x="582" y="137" width="8" height="3" fill="#F2EE68"/><rect x="582.5" y="141" width="7" height="4" fill="#F4F070"/><rect x="582" y="146" width="8" height="3" fill="#F2EE68"/><rect x="591" y="133" width="1.5" height="20" fill="#7A7624"/><rect x="649.5" y="132.5" width="18" height="20" fill="none" stroke="#E2A050" stroke-width="1.3"/><rect x="652" y="135" width="15" height="17" fill="#1FA844" stroke="#0F6A28" stroke-width=".7"/><rect x="652" y="135" width="13" height="2.5" fill="#45D85A"/><path d="M665 135L667 137V152H665Z" fill="#0E7430"/><path d="M654 140v8M656.5 140v8M659 140v8M661.5 140v8" stroke="#6FE080" stroke-width=".9"/></svg>
<div class="t" style="left:253px;top:77.5px;font-size:7px;font-family:'Liberation Mono',monospace;font-weight:bold;color:#2A2A2A"><span class="k">阳泉开发区</span>LTE<span class="k">对接</span>-32PTN</div>
<div class="t" style="left:385px;top:79.5px;font-size:7px;font-family:'Liberation Mono',monospace;font-weight:bold;color:#2A2A2A"><span class="k">阳泉新大楼</span>LTE<span class="k">对接</span>-32PTN</div>
<div class="t" style="left:497px;top:95.5px;font-size:7px;font-family:'Liberation Mono',monospace;font-weight:bold;color:#2A2A2A"><span class="k">阳泉新大楼</span>6500-16L-5P</div>
<div class="t" style="left:533px;top:104.0px;font-size:7px;font-family:'Liberation Mono',monospace;font-weight:bold;color:#2A2A2A">TN</div>
<div class="t" style="left:567px;top:155px;font-size:7px;font-family:'Liberation Mono',monospace;font-weight:bold;color:#2A2A2A"><span class="k">阳泉新大楼</span>1</div>
<div class="t" style="left:627px;top:153.5px;font-size:7px;font-family:'Liberation Mono',monospace;font-weight:bold;color:#2A2A2A"><span class="k">阳泉市政府</span>6500-8PTN</div>
<div class="t" style="left:211px;top:126px;font-size:7px;font-weight:bold;color:#1A1A1A"><span class="k">泉开</span></div>
<div class="t" style="left:211px;top:183.5px;font-size:7px;font-weight:bold;color:#1A1A1A"><span class="k">阳泉</span></div>
<div class="t" style="left:211px;top:226.5px;font-size:7px;font-weight:bold;color:#1A1A1A"><span class="k">阳泉</span></div>

<div class="a" style="left:791px;top:51px;width:9px;height:251px;background:#F5F3EC"></div>
<div class="a" style="left:791px;top:52px;width:9px;height:9px;background:linear-gradient(#FFF,#E3E0D3);border:1px solid #B3AF9F;border-radius:1px"></div>
<svg class="a" style="left:793px;top:55px" width="5" height="3" viewBox="0 0 5 3"><path d="M0 3H5L2.5 0Z" fill="#222"/></svg>
<div class="a" style="left:791px;top:62px;width:9px;height:236px;background:linear-gradient(90deg,#94B2E4,#A8C2EE 50%,#8EACE0);border:1px solid #7090C8;border-radius:1px"></div>
<div class="a" style="left:212px;top:302px;width:588px;height:9px;background:#F5F3EC"></div>
<div class="a" style="left:212px;top:302px;width:9px;height:9px;background:linear-gradient(#FFF,#E3E0D3);border:1px solid #B3AF9F;border-radius:1px"></div>
<svg class="a" style="left:215px;top:304px" width="3" height="5" viewBox="0 0 3 5"><path d="M3 0V5L0 2.5Z" fill="#222"/></svg>
<div class="a" style="left:222px;top:302px;width:550px;height:9px;background:linear-gradient(#9CB8E8,#B0C8F0 50%,#94B2E4);border:1px solid #7C9ACE;border-radius:1px"></div>
<div class="a" style="left:781px;top:302px;width:9px;height:9px;background:linear-gradient(#FFF,#E3E0D3);border:1px solid #B3AF9F;border-radius:1px"></div>
<svg class="a" style="left:784px;top:304px" width="3" height="5" viewBox="0 0 3 5"><path d="M0 0V5L3 2.5Z" fill="#222"/></svg>
<div class="a" style="left:791px;top:302px;width:9px;height:9px;background:linear-gradient(#FFF,#E3E0D3);border:1px solid #B3AF9F;border-radius:1px"></div>
<svg class="a" style="left:793px;top:305px" width="5" height="3" viewBox="0 0 5 3"><path d="M0 0H5L2.5 3Z" fill="#222"/></svg>
<div class="a" style="left:567px;top:312px;width:78px;height:1px;border-top:1px dotted #C8C4B4"></div>
<div class="a" style="left:209px;top:140px;width:1px;height:292px;border-left:1px dotted #D0CCBC"></div>
<svg class="a" style="left:217px;top:319px" width="9" height="9" viewBox="0 0 9 9"><rect x=".5" y=".5" width="8" height="8" fill="#E2383A" stroke="#B02020"/><path d="M2.5 2.5L6.5 6.5M6.5 2.5L2.5 6.5" stroke="#fff" stroke-width="1.2"/></svg>
<div class="t" style="right:3px;top:319px;font-size:8.5px;color:#222"><span class="k">共</span> 2 <span class="k">条记录</span></div>
<div class="a" style="left:212px;top:332px;width:586px;height:101px;background:#fff;border:1px solid #ABA795"></div>
<div class="a" style="left:212px;top:332px;width:586px;height:12px;background:linear-gradient(#FFF,#F3F0E6 60%,#E2DED0);border:1px solid #ABA795;border-bottom:1px solid #A6A290"></div>
<div class="a" style="left:765px;top:333px;width:32px;height:11px;background:#F1EEE4"></div>
<div class="a" style="left:212px;top:358px;width:552px;height:14px;background:#F3F0E4"></div>
<div class="a" style="left:645px;top:332px;width:1px;height:40px;background:#DCD8CB"></div>
<div class="a" style="left:689px;top:332px;width:1px;height:40px;background:#DCD8CB"></div>
<div class="a" style="left:764px;top:332px;width:1px;height:40px;background:#DCD8CB"></div>
<div class="a" style="left:212px;top:357px;width:552px;height:1px;background:#E4E0D4"></div>
<div class="a" style="left:212px;top:371px;width:552px;height:1px;background:#E4E0D4"></div>
<div class="t" style="left:213px;top:334px;font-size:8px"><span class="k">行号</span></div>
<div class="t" style="left:649px;top:334px;font-size:8px"><span class="k">状态</span></div>
<div class="t" style="left:691px;top:334px;font-size:8px">IP<span class="k">地址</span></div>
<div class="t" style="left:691px;top:348px;font-size:8px">172.49.16.8</div>
<div class="t" style="left:691px;top:362px;font-size:8px">172.49.60.65</div>
<div class="a" style="left:213px;top:344px;width:24px;height:14px;background:linear-gradient(90deg,#FFFFFF,#F1EEE3 60%,#E4E0D2);border-bottom:1px solid #D0CCBC"></div>
<div class="a" style="left:213px;top:358px;width:24px;height:14px;background:linear-gradient(90deg,#FFFFFF,#F1EEE3 60%,#E4E0D2);border-bottom:1px solid #D0CCBC"></div>
<div class="t" style="left:221px;top:348px;font-size:8px">1</div>
<div class="t" style="left:221px;top:362px;font-size:8px">2</div>
<div class="a" style="left:205px;top:434px;width:20px;height:1px;border-top:1px dotted #C8C4B4"></div><div class="a" style="left:567px;top:434px;width:30px;height:1px;border-top:1px dotted #C8C4B4"></div>
<svg class="a" style="left:3px;top:433px" width="14" height="4" viewBox="0 0 14 4"><path d="M0 4L2.5 0L5 4Z M8 0H13L10.5 4Z" fill="#BDB9AA"/></svg>
<div class="a" style="left:60px;top:437px;width:739px;height:142px;border-top:1px solid #E2C36E;border-left:1px solid #E2C36E;border-right:1px solid #E2C36E;background:#F5F2E6"></div>
<div class="a" style="left:60px;top:578px;width:740px;height:1px;background:#DDBE6A"></div>
<div class="a" style="left:2px;top:438px;width:59px;height:15px;background:#FBE09A;border:1px solid #E2C36E;border-right:none;border-radius:3px 0 0 0"></div>
<div class="a" style="left:2px;top:453px;width:59px;height:13px;background:#F6F2E2;border:1px solid #E2C36E;border-top:none;border-right:none"></div>
<div class="t" style="left:7px;top:442px;font-size:8px;color:#333"><span class="k">网元监控告警</span></div>
<div class="t" style="left:7px;top:455px;font-size:8px;color:#333"><span class="k">网元性能监控</span></div>
<svg class="a" style="left:65px;top:441px" width="12" height="11" viewBox="0 0 12 11"><rect x=".5" y=".5" width="11" height="10" fill="#8FB4E6" stroke="#3A6AB0"/><rect x="3" y="3" width="6" height="5" fill="#fff"/></svg>
<svg class="a" style="left:81px;top:445px" width="5" height="3" viewBox="0 0 5 3"><path d="M0 0H5L2.5 3Z" fill="#111"/></svg>
<svg class="a" style="left:88px;top:441px" width="11" height="10" viewBox="0 0 11 10"><path d="M.5 5 Q.5 2 3 2 H8 Q10.5 2 10.5 5 V9.5 H.5Z" fill="#CFE2F8" stroke="#4A7FC8"/><rect x="3" y="1" width="5" height="3" fill="#fff" stroke="#888" stroke-width=".5"/></svg>
<div class="a" style="left:105px;top:441px;width:1px;height:11px;background:#D8D4C2"></div>
<svg class="a" style="left:110px;top:441px" width="11" height="11" viewBox="0 0 11 11"><rect x=".5" y="4" width="9" height="6.5" fill="#7FB0EA" stroke="#3A6AB0"/><path d="M5 6L10 1" stroke="#E0A020" stroke-width="1.5"/></svg>
<div class="a" style="left:125px;top:441px;width:1px;height:11px;background:#D8D4C2"></div>
<svg class="a" style="left:130px;top:441px" width="11" height="11" viewBox="0 0 11 11"><path d="M1.5 9.5L6 5" stroke="#E0A830" stroke-width="2"/><circle cx="7.5" cy="3.5" r="2.5" fill="none" stroke="#D09020" stroke-width="1.3"/></svg>
<svg class="a" style="left:145px;top:441px" width="11" height="11" viewBox="0 0 11 11"><rect x=".5" y=".5" width="10" height="10" rx="1" fill="#E8F0FA" stroke="#4A7AC0"/><rect x=".5" y=".5" width="10" height="2.5" fill="#E04040"/><path d="M3 6.5a2.5 2.5 0 0 1 5 0" fill="none" stroke="#3A7AD0"/></svg>
<div class="t" style="left:157px;top:443px;font-size:8.5px;color:#222"><span class="k">告警级别</span>:</div>
<div class="a" style="left:192px;top:440px;width:40px;height:13px;background:#fff;border:1px solid #8E8A7A"></div>
<div class="t" style="left:195px;top:442px;font-size:8.5px;color:#222"><span class="k">所有</span></div>
<div class="t" style="right:8px;top:442px;font-size:8px;color:#222"><span class="k">总数</span>:0 <span class="k">严重</span>:0 <span class="k">主要</span>:0 <span class="k">次要</span>:0 <span class="k">警告</span>:0</div>
<div class="a" style="left:62px;top:456px;width:735px;height:121px;background:#fff;border:1px solid #ABA795"></div>
<div class="a" style="left:62px;top:456px;width:735px;height:14px;background:linear-gradient(#FFF,#F3F0E6 60%,#E2DED0);border:1px solid #ABA795;border-bottom:1px solid #A6A290"></div>
<div class="a" style="left:84px;top:457px;width:1px;height:13px;background:#C9C5B4"></div>
<div class="a" style="left:96px;top:457px;width:1px;height:13px;background:#C9C5B4"></div>
<div class="a" style="left:171px;top:457px;width:1px;height:13px;background:#C9C5B4"></div>
<div class="a" style="left:222px;top:457px;width:1px;height:13px;background:#C9C5B4"></div>
<div class="a" style="left:636px;top:457px;width:1px;height:13px;background:#C9C5B4"></div>
<div class="t" style="left:64px;top:459px;font-size:8.5px"><span class="k">行号</span></div>
<div class="t" style="left:86px;top:459px;font-size:8.5px;color:#888">...</div>
<div class="t" style="left:97px;top:459px;font-size:8.5px"><span class="k">确认状态</span></div>
<div class="t" style="left:172px;top:459px;font-size:8.5px"><span class="k">告警级别</span></div>
<div class="t" style="left:638px;top:459px;font-size:8.5px"><span class="k">告警码</span></div>
<div class="a" style="left:63px;top:567px;width:733px;height:9px;background:#F4F2EA;border-top:1px solid #E4E0D2"></div>
<div class="a" style="left:787px;top:567px;width:9px;height:9px;background:linear-gradient(#FFF,#E3E0D3);border:1px solid #9C9886;border-radius:1px"></div>
<svg class="a" style="left:790px;top:569px" width="3" height="5" viewBox="0 0 3 5"><path d="M0 0V5L3 2.5Z" fill="#222"/></svg>
<div class="a" style="left:0;top:579px;width:800px;height:16px;background:#F5F2E6"></div>
<div class="a" style="left:623px;top:582px;width:1px;height:12px;background:#C9C5B4;box-shadow:1px 0 0 #fff"></div>
<svg class="a" style="left:4px;top:582px" width="8" height="9" viewBox="0 0 8 9"><rect x=".5" y=".5" width="5" height="4" fill="#7FB0EA" stroke="#3A6AB0" stroke-width=".6"/><rect x="3" y="4.5" width="4.5" height="4" fill="#CFE2F8" stroke="#3A6AB0" stroke-width=".6"/></svg>
<div class="a" style="left:11px;top:526px;width:509px;height:80px;background:linear-gradient(#B4C4D8 1px,#BCCCDF 5px,#CBDAEC 17px,#D0DFF0 30px);border:1px solid #8A9AAE;border-radius:6px 6px 0 0"></div>
<svg class="a" style="left:17px;top:533px" width="10" height="10" viewBox="0 0 11 11"><rect width="11" height="11" fill="url(#ig)"/><path d="M2 3h3M6 3h3M2 6h7M4 8h3M5 2v7" stroke="#fff" stroke-width=".8"/></svg>
<div class="t" style="left:30px;top:534px;font-size:8px;color:#333"><span class="k">网元不同步信息</span></div>
<div class="a" style="left:16px;top:544px;width:499px;height:60px;background:#F5F2E6"></div>
<div class="a" style="left:24px;top:559px;width:485px;height:50px;border:1px solid #D3CFBF;border-radius:3px;box-shadow:inset 1px 1px 0 #fff"></div>
<div class="a" style="left:27px;top:554px;width:56px;height:10px;background:#F5F2E6"></div>
<div class="t" style="left:28px;top:555px;font-size:8px;color:#222"><span class="k">网元不同步信息</span></div>
<div class="a" style="left:35px;top:574px;width:461px;height:30px;background:#fff;border:1px solid #8E8A78"></div>
<div class="a" style="left:35px;top:574px;width:461px;height:12px;background:linear-gradient(#FFF,#F3F0E6 60%,#E2DED0);border:1px solid #8E8A78;border-bottom:1px solid #A6A290"></div>
<div class="a" style="left:66px;top:575px;width:1px;height:20px;background:#C9C5B4"></div>
<div class="a" style="left:207px;top:575px;width:1px;height:20px;background:#C9C5B4"></div>
<div class="a" style="left:347px;top:575px;width:1px;height:20px;background:#C9C5B4"></div>
<div class="t" style="left:43px;top:576.5px;font-size:8.5px"><span class="k">行号</span></div>
<div class="t" style="left:128px;top:576.5px;font-size:8.5px"><span class="k">网元</span></div>
<div class="t" style="left:261px;top:576.5px;font-size:8.5px"><span class="k">同步状态</span></div>
<div class="t" style="left:386px;top:576.5px;font-size:8.5px"><span class="k">自动上载策略状态</span></div>
<div class="t" style="left:48px;top:588px;font-size:8.5px">6</div>
<div class="t" style="left:67px;top:588px;font-size:8.5px"><span class="k">阳泉庙大一汽大众</span>4S<span class="k">店</span>PTN</div>
<div class="t" style="left:208px;top:588px;font-size:8.5px"><span class="k">未同步</span></div>
<div class="t" style="left:348px;top:588px;font-size:8.5px"><span class="k">挂起</span></div>
<div class="a" style="left:515px;top:544px;width:5px;height:60px;background:#C8DAEE"></div>

<div class="a" style="left:224px;top:122px;width:343px;height:451px;background:linear-gradient(#9CB5D3 1px,#A2BAD6 5px,#B6CDEA 18px,#C4D8F0 30px);border:1px solid #3F6A86;border-radius:6px 6px 0 0"></div>
<div class="a" style="left:225px;top:123px;width:341px;height:1px;background:rgba(200,200,200,.5);border-radius:5px 5px 0 0"></div>
<svg class="a" style="left:230px;top:128px" width="11" height="11" viewBox="0 0 11 11"><defs><linearGradient id="ig" x1="0" x2="1"><stop offset="0" stop-color="#2A3FD8"/><stop offset=".5" stop-color="#6A8CF0"/><stop offset="1" stop-color="#2A3FD8"/></linearGradient></defs><rect width="11" height="11" fill="url(#ig)"/><path d="M2 3h3M6 3h3M2 6h7M4 8h3M5 2v7" stroke="#fff" stroke-width=".8"/></svg>
<div class="t" style="left:243px;top:129.5px;font-size:8px;color:#333"><span class="k">网元属性</span></div>
<div class="a" style="left:541px;top:129px;width:19px;height:11px;background:linear-gradient(#EAA89C 0,#D86A58 45%,#C8402A 55%,#D86A58 100%);border:1px solid #8A4A40;border-radius:2px"></div>
<svg class="a" style="left:546px;top:130px" width="9" height="9" viewBox="0 0 9 9"><path d="M2 2L7 7M7 2L2 7" stroke="#fff" stroke-width="1.8"/></svg>
<div class="a" style="left:229px;top:141px;width:333px;height:426px;background:#F5F2E6"></div>
<div class="a" style="left:237px;top:149px;width:317px;height:389px;border:1px solid #D3CFBF;box-shadow:inset 1px 1px 0 #fff,1px 1px 0 #fff"></div>
<div class="a" style="left:242px;top:154px;width:306px;height:360px;background:#F5F2E6;border:1px solid #8E8A78;overflow:hidden">
<div class="a" style="left:0;top:0;width:306px;height:12px;background:linear-gradient(#FFFFFF,#F3F0E6 60%,#E2DED0);border-bottom:1px solid #A6A290"></div>
<div class="a" style="left:120px;top:0;width:1px;height:12px;background:#BDB9A8"></div>
<div class="a" style="left:295px;top:0;width:1px;height:12px;background:#BDB9A8"></div>
<div class="t" style="left:45px;top:2px;font-size:8px;color:#222"><span class="k">属性名字</span></div>
<div class="t" style="left:199px;top:2px;font-size:8px;color:#222"><span class="k">属性值</span></div>
<div class="a" style="left:120px;top:12.00px;width:175px;height:14.36px;background:#fff"></div>
<div class="a" style="left:0;top:25.36px;width:295px;height:1px;background:#DCD8CB"></div>
<div class="t" style="left:0px;top:15.50px;font-size:8px;color:#222"><span class="k">网元名称</span></div>
<div class="t" style="left:121px;top:15.50px;font-size:8px;color:#222"><span class="k">阳泉新大楼</span>6500-16L-5PTN</div>
<div class="a" style="left:0;top:39.72px;width:295px;height:1px;background:#DCD8CB"></div>
<div class="t" style="left:0px;top:29.86px;font-size:8px;color:#222"><span class="k">设备类型</span></div>
<div class="t" style="left:121px;top:29.86px;font-size:8px;color:#222">ZXCTN 6500-16L</div>
<div class="a" style="left:0;top:54.08px;width:295px;height:1px;background:#DCD8CB"></div>
<div class="t" style="left:0px;top:44.22px;font-size:8px;color:#222"><span class="k">网元类型</span></div>
<div class="t" style="left:121px;top:44.22px;font-size:8px;color:#222">NA</div>
<div class="a" style="left:0;top:68.44px;width:295px;height:1px;background:#DCD8CB"></div>
<div class="t" style="left:0px;top:58.58px;font-size:8px;color:#222"><span class="k">网管</span>ID</div>
<div class="t" style="left:121px;top:58.58px;font-size:8px;color:#222">2019</div>
<div class="a" style="left:120px;top:69.44px;width:175px;height:14.36px;background:#fff"></div>
<div class="a" style="left:0;top:82.80px;width:295px;height:1px;background:#DCD8CB"></div>
<div class="t" style="left:0px;top:72.94px;font-size:8px;color:#222">IP<span class="k">地址</span></div>
<div class="t" style="left:121px;top:72.94px;font-size:8px;color:#222">172.42.87.51</div>
<div class="a" style="left:120px;top:83.80px;width:175px;height:14.36px;background:#fff"></div>
<div class="a" style="left:0;top:97.16px;width:295px;height:1px;background:#DCD8CB"></div>
<div class="t" style="left:0px;top:87.30px;font-size:8px;color:#222"><span class="k">子网掩码</span></div>
<div class="t" style="left:121px;top:87.30px;font-size:8px;color:#222">255.255.255.255</div>
<div class="a" style="left:120px;top:98.16px;width:175px;height:14.36px;background:#fff"></div>
<div class="a" style="left:0;top:111.52px;width:295px;height:1px;background:#DCD8CB"></div>
<div class="t" style="left:0px;top:101.66px;font-size:8px;color:#222"><span class="k">是否网关网元</span></div>
<div class="t" style="left:121px;top:101.66px;font-size:8px;color:#222"><span class="k">否</span></div>
<div class="a" style="left:120px;top:112.52px;width:175px;height:14.36px;background:#fff"></div>
<div class="a" style="left:0;top:125.88px;width:295px;height:1px;background:#DCD8CB"></div>
<div class="t" style="left:0px;top:116.02px;font-size:8px;color:#222"><span class="k">网关网元</span></div>
<div class="a" style="left:0;top:140.24px;width:295px;height:1px;background:#DCD8CB"></div>
<div class="t" style="left:0px;top:130.38px;font-size:8px;color:#222"><span class="k">绑定的</span>IP<span class="k">地址</span></div>
<div class="t" style="left:121px;top:130.38px;font-size:8px;color:#222">127.0.0.1</div>
<div class="a" style="left:120px;top:141.24px;width:175px;height:14.36px;background:#fff"></div>
<div class="a" style="left:0;top:154.60px;width:295px;height:1px;background:#DCD8CB"></div>
<div class="t" style="left:0px;top:144.74px;font-size:8px;color:#222"><span class="k">在线离线</span></div>
<div class="t" style="left:121px;top:144.74px;font-size:8px;color:#222"><span class="k">在线</span></div>
<div class="a" style="left:120px;top:155.60px;width:175px;height:14.36px;background:#fff"></div>
<div class="a" style="left:0;top:168.96px;width:295px;height:1px;background:#DCD8CB"></div>
<div class="t" style="left:0px;top:159.10px;font-size:8px;color:#222"><span class="k">硬件版本</span></div>
<div class="t" style="left:121px;top:159.10px;font-size:8px;color:#222">V1.00.10R2</div>
<div class="a" style="left:0;top:183.32px;width:295px;height:1px;background:#DCD8CB"></div>
<div class="t" style="left:0px;top:173.46px;font-size:8px;color:#222"><span class="k">软件版本</span></div>
<div class="t" style="left:121px;top:173.46px;font-size:8px;color:#222">V1.00</div>
<div class="a" style="left:120px;top:184.32px;width:175px;height:14.36px;background:#fff"></div>
<div class="a" style="left:0;top:197.68px;width:295px;height:1px;background:#DCD8CB"></div>
<div class="t" style="left:0px;top:187.82px;font-size:8px;color:#222"><span class="k">设备层次</span></div>
<div class="t" style="left:121px;top:187.82px;font-size:8px;color:#222"><span class="k">无</span></div>
<div class="a" style="left:120px;top:198.68px;width:175px;height:14.36px;background:#fff"></div>
<div class="a" style="left:0;top:198.68px;width:120px;height:14.36px;background:#FCD682"></div>
<div class="a" style="left:121px;top:199.68px;width:173px;height:12.86px;background:#fff;border:1px solid #7E7A6A"></div>
<div class="t" style="left:175px;top:202.18px;font-size:8px;color:#222;letter-spacing:.6px">172. 42 . 87 . 51</div>
<div class="a" style="left:0;top:212.04px;width:295px;height:1px;background:#DCD8CB"></div>
<div class="t" style="left:0px;top:202.18px;font-size:8px;color:#222"><span class="k">业务环回地址</span></div>
<div class="a" style="left:0;top:226.40px;width:295px;height:1px;background:#DCD8CB"></div>
<div class="t" style="left:0px;top:216.54px;font-size:8px;color:#222"><span class="k">主机名称</span></div>
<div class="a" style="left:0;top:240.76px;width:295px;height:1px;background:#DCD8CB"></div>
<div class="t" style="left:0px;top:230.90px;font-size:8px;color:#222"><span class="k">系统</span>OID</div>
<div class="a" style="left:0;top:255.12px;width:295px;height:1px;background:#DCD8CB"></div>
<div class="t" style="left:0px;top:245.26px;font-size:8px;color:#222"><span class="k">系统名称</span></div>
<div class="a" style="left:0;top:269.48px;width:295px;height:1px;background:#DCD8CB"></div>
<div class="t" style="left:0px;top:259.62px;font-size:8px;color:#222">MAC<span class="k">地址</span></div>
<div class="t" style="left:121px;top:259.62px;font-size:8px;color:#222">34 e0 cf fe 94 30</div>
<div class="a" style="left:0;top:283.84px;width:295px;height:1px;background:#DCD8CB"></div>
<div class="t" style="left:0px;top:273.98px;font-size:8px;color:#222">MPLS-TP<span class="k">标签唯一性</span></div>
<div class="t" style="left:121px;top:273.98px;font-size:8px;color:#222"><span class="k">网元内唯一</span></div>
<div class="a" style="left:120px;top:284.84px;width:175px;height:14.36px;background:#fff"></div>
<div class="a" style="left:0;top:298.20px;width:295px;height:1px;background:#DCD8CB"></div>
<div class="t" style="left:0px;top:288.34px;font-size:8px;color:#222">SNMP<span class="k">端口</span></div>
<div class="t" style="left:121px;top:288.34px;font-size:8px;color:#222">161</div>
<div class="a" style="left:120px;top:299.20px;width:175px;height:14.36px;background:#fff"></div>
<div class="a" style="left:0;top:312.56px;width:295px;height:1px;background:#DCD8CB"></div>
<div class="t" style="left:0px;top:302.70px;font-size:8px;color:#222">SNMP<span class="k">团体串</span></div>
<div class="t" style="left:121px;top:302.70px;font-size:8px;color:#222">public</div>
<div class="a" style="left:120px;top:313.56px;width:175px;height:14.36px;background:#fff"></div>
<div class="a" style="left:0;top:326.92px;width:295px;height:1px;background:#DCD8CB"></div>
<div class="t" style="left:0px;top:317.06px;font-size:8px;color:#222">SNMP<span class="k">写团体串</span></div>
<div class="t" style="left:121px;top:317.06px;font-size:8px;color:#222">private</div>
<div class="a" style="left:120px;top:327.92px;width:175px;height:14.36px;background:#fff"></div>
<div class="a" style="left:0;top:341.28px;width:295px;height:1px;background:#DCD8CB"></div>
<div class="t" style="left:0px;top:331.42px;font-size:8px;color:#222">SNMP<span class="k">超时</span>(<span class="k">秒</span>)</div>
<div class="t" style="left:121px;top:331.42px;font-size:8px;color:#222">5</div>
<div class="a" style="left:120px;top:342.28px;width:175px;height:14.36px;background:#fff"></div>
<div class="a" style="left:0;top:355.64px;width:295px;height:1px;background:#DCD8CB"></div>
<div class="t" style="left:0px;top:345.78px;font-size:8px;color:#222">SNMP<span class="k">重试次数</span></div>
<div class="t" style="left:121px;top:345.78px;font-size:8px;color:#222">1</div>
<div class="a" style="left:0;top:370.00px;width:295px;height:1px;background:#DCD8CB"></div>
<div class="t" style="left:0px;top:360.14px;font-size:8px;color:#222"></div>
<div class="a" style="left:120px;top:12px;width:1px;height:348px;background:#DCD8CB"></div>
<div class="a" style="left:295px;top:12px;width:11px;height:348px;background:#F5F3EC"></div>
<div class="a" style="left:296px;top:13px;width:9px;height:9px;background:linear-gradient(#FFF,#E3E0D3);border:1px solid #B3AF9F;border-radius:1px"></div>
<svg class="a" style="left:298px;top:16px" width="5" height="3" viewBox="0 0 5 3"><path d="M0 3H5L2.5 0Z" fill="#222"/></svg>
<div class="a" style="left:296px;top:22px;width:9px;height:194px;background:linear-gradient(90deg,#94B2E4,#A8C2EE 50%,#8EACE0);border:1px solid #7090C8;border-radius:1px"></div>
<div class="a" style="left:296px;top:351px;width:9px;height:9px;background:linear-gradient(#FFF,#E3E0D3);border:1px solid #B3AF9F;border-radius:1px"></div>
<svg class="a" style="left:298px;top:354px" width="5" height="3" viewBox="0 0 5 3"><path d="M0 0H5L2.5 3Z" fill="#222"/></svg>
</div>
<div class="a" style="left:481.5px;top:519px;width:66.5px;height:14px;background:linear-gradient(#FFFFFF,#F2F0E8 70%,#DEDACB);border:1px solid #9C9886;border-radius:2px;box-shadow:inset 0 0 0 0px #F6DFA0"></div>
<div class="t" style="left:490px;top:522px;font-size:8.5px;color:#222"><span class="k">机架子架配置</span></div>
<div class="a" style="left:474.5px;top:546px;width:37.0px;height:13.5px;background:linear-gradient(#FFFFFF,#F2F0E8 70%,#DEDACB);border:1px solid #E2C06A;border-radius:2px;box-shadow:inset 0 0 0 1px #F6DFA0"></div>
<div class="t" style="left:484px;top:549px;font-size:8.5px;color:#222"><span class="k">应用</span></div>
<div class="a" style="left:516px;top:546px;width:37px;height:13.5px;background:linear-gradient(#FFFFFF,#F2F0E8 70%,#DEDACB);border:1px solid #9C9886;border-radius:2px;box-shadow:inset 0 0 0 0px #F6DFA0"></div>
<div class="t" style="left:526px;top:549px;font-size:8.5px;color:#222"><span class="k">关闭</span></div>

<div class="a" style="left:0;top:595px;width:800px;height:5px;background:linear-gradient(#7E8CA4,#94A2B8)"></div>
<div class="a" style="left:8px;top:596px;width:18px;height:4px;background:#C8D4E4;border-radius:9px 9px 0 0"></div>
<div class="a" style="left:110px;top:596px;width:29px;height:4px;background:linear-gradient(#DCE2EA,#C2CAD6);border-radius:2px 2px 0 0"></div>
<div class="a" style="left:140px;top:596px;width:29px;height:4px;background:linear-gradient(#DCE2EA,#C2CAD6);border-radius:2px 2px 0 0"></div>
<div class="a" style="left:170px;top:596px;width:29px;height:4px;background:linear-gradient(#DCE2EA,#C2CAD6);border-radius:2px 2px 0 0"></div>
<div class="a" style="left:200px;top:596px;width:32px;height:4px;background:linear-gradient(#DCE2EA,#C2CAD6);border-radius:2px 2px 0 0"></div>
<div class="a" style="left:233px;top:596px;width:31px;height:4px;background:linear-gradient(#DCE2EA,#C2CAD6);border-radius:2px 2px 0 0"></div>
<div class="a" style="left:266px;top:596px;width:30px;height:4px;background:linear-gradient(#DCE2EA,#C2CAD6);border-radius:2px 2px 0 0"></div>
<div class="a" style="left:298px;top:596px;width:30px;height:4px;background:linear-gradient(#DCE2EA,#C2CAD6);border-radius:2px 2px 0 0"></div>
<div class="a" style="left:329px;top:596px;width:30px;height:4px;background:linear-gradient(#DCE2EA,#C2CAD6);border-radius:2px 2px 0 0"></div>
<div class="a" style="left:360px;top:596px;width:30px;height:4px;background:linear-gradient(#DCE2EA,#C2CAD6);border-radius:2px 2px 0 0"></div>
<div class="a" style="left:392px;top:596px;width:29px;height:4px;background:linear-gradient(#DCE2EA,#C2CAD6);border-radius:2px 2px 0 0"></div>
<div class="a" style="left:422px;top:596px;width:29px;height:4px;background:linear-gradient(#DCE2EA,#C2CAD6);border-radius:2px 2px 0 0"></div>
<div class="a" style="left:452px;top:596px;width:29px;height:4px;background:linear-gradient(#DCE2EA,#C2CAD6);border-radius:2px 2px 0 0"></div>
<div class="a" style="left:482px;top:596px;width:29px;height:4px;background:linear-gradient(#DCE2EA,#C2CAD6);border-radius:2px 2px 0 0"></div>
<div class="a" style="left:512px;top:596px;width:8px;height:4px;background:linear-gradient(#DCE2EA,#C2CAD6);border-radius:2px 2px 0 0"></div>
<div class="a" style="left:427px;top:597px;width:15px;height:3px;background:#2838B8"></div>
<div class="a" style="left:457px;top:597px;width:15px;height:3px;background:#2838B8"></div>
<div class="a" style="left:487px;top:597px;width:15px;height:3px;background:#2838B8"></div>
<div class="a" style="left:121px;top:597px;width:8px;height:3px;background:#4CAF50"></div>
<div class="a" style="left:151px;top:597px;width:8px;height:3px;background:#4CAF50"></div>
<div class="a" style="left:181px;top:597px;width:8px;height:3px;background:#4CAF50"></div>
<div class="a" style="left:211px;top:597px;width:8px;height:3px;background:#F0C040"></div>
<div class="a" style="left:244px;top:597px;width:8px;height:3px;background:#F0C040"></div>
<div class="a" style="left:276px;top:597px;width:8px;height:3px;background:#A0A0A0"></div>
<div class="a" style="left:308px;top:597px;width:8px;height:3px;background:#F08A20"></div>
<div class="a" style="left:339px;top:597px;width:8px;height:3px;background:#F08A20"></div>
<div class="a" style="left:370px;top:597px;width:8px;height:3px;background:#F08A20"></div>
<div class="a" style="left:405px;top:597px;width:8px;height:3px;background:#80C0F0"></div>
<div class="a" style="left:469px;top:581px;width:63px;height:14px;background:linear-gradient(#FFFFFF,#E8E8F0);border:1px solid #767676;border-radius:2px;box-shadow:1px 1px 1px rgba(0,0,0,.3)"></div>
<div class="t" style="left:472px;top:584.5px;font-size:8px;color:#555">Telnet/SSH<span class="k">工具</span></div>

<script>/*fontcheck*/(function(){var s=document.createElement("span");s.style.cssText="position:absolute;left:0;top:0;font-size:100px;font-family:Liberation Sans;white-space:nowrap;visibility:hidden";s.textContent="\u9633\u6cc9\u4e2d\u56fd";document.body.appendChild(s);var w=s.getBoundingClientRect().width;document.body.removeChild(s);if(w>340){var st=document.createElement("style");st.textContent=".k{font-size:.95em!important;-webkit-text-stroke:0!important;letter-spacing:0!important}";document.head.appendChild(st);}})();</script></body></html>
